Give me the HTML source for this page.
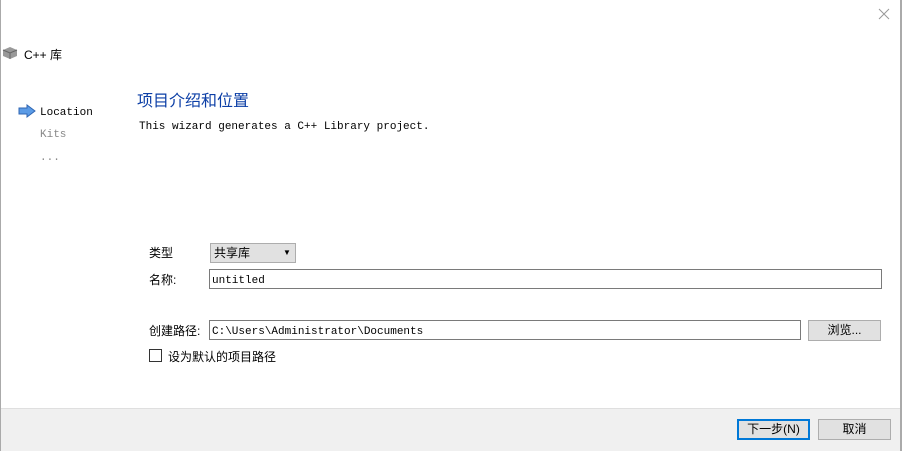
<!DOCTYPE html><html><head><style>
body{margin:0;width:902px;height:451px;position:relative;background:#fff;font-family:"Liberation Sans","Noto Sans CJK SC",sans-serif;font-size:12px;overflow:hidden}
.a{position:absolute}
.mono{font-family:"Liberation Mono","Noto Sans CJK SC",monospace;font-size:11px}
.in{position:absolute;border:1px solid #7a7a7a;background:#fff;box-sizing:border-box;padding:4px 2px 0;font-family:"Liberation Mono",monospace;font-size:11px;line-height:14px}
.btn{position:absolute;background:#e1e1e1;border:1px solid #adadad;box-sizing:border-box;text-align:center;line-height:18px;font-size:12px}
</style></head><body>
<div class="a" style="left:0;top:0;width:1px;height:451px;background:#aaa"></div>
<div class="a" style="left:900px;top:0;width:2px;height:451px;background:#aaa"></div>
<div class="a" style="left:0;top:450px;width:902px;height:1px;background:#aaa"></div>
<svg class="a" style="left:878px;top:8px" width="12" height="12"><path d="M1 1L11 11M11 1L1 11" stroke="#999" stroke-width="1"/></svg>
<svg class="a" style="left:2px;top:46px" width="16" height="14"><path d="M1 4L8 1L15 4L15 10L8 13L1 10Z" fill="#999"/><path d="M1 4L8 7L15 4M8 7V13" stroke="#666" fill="none"/></svg>
<div class="a" style="left:24px;top:46px;font-size:12px">C++ 库</div>
<svg class="a" style="left:18px;top:104px" width="18" height="14"><path d="M1 4H9V1L17 7L9 13V10H1Z" fill="#5b9be6" stroke="#2f66b3"/></svg>
<div class="a mono" style="left:40px;top:107px">Location</div>
<div class="a mono" style="left:40px;top:129px;color:#888">Kits</div>
<div class="a mono" style="left:40px;top:152px;color:#888">...</div>
<div class="a" style="left:137px;top:87px;font-size:16px;color:#0b3ea6">项目介绍和位置</div>
<div class="a mono" style="left:139px;top:121px">This wizard generates a C++ Library project.</div>
<div class="a" style="left:149px;top:244px">类型</div>
<div class="btn" style="left:210px;top:243px;width:86px;height:20px;text-align:left;padding-left:3px">共享库<span style="position:absolute;left:72px;top:0;font-size:8px">▼</span></div>
<div class="a" style="left:149px;top:271px">名称:</div>
<div class="in" style="left:209px;top:269px;width:673px;height:20px">untitled</div>
<div class="a" style="left:149px;top:322px">创建路径:</div>
<div class="in" style="left:209px;top:320px;width:592px;height:20px">C:\Users\Administrator\Documents</div>
<div class="btn" style="left:808px;top:320px;width:73px;height:21px">浏览...</div>
<div class="a" style="left:149px;top:349px;width:11px;height:11px;border:1px solid #333"></div>
<div class="a" style="left:168px;top:348px">设为默认的项目路径</div>
<div class="a" style="left:1px;top:408px;width:899px;height:42px;background:#f0f0f0;border-top:1px solid #dfdfdf"></div>
<div class="btn" style="left:737px;top:419px;width:73px;height:21px;border:2px solid #0078d7;line-height:17px">下一步(N)</div>
<div class="btn" style="left:818px;top:419px;width:73px;height:21px">取消</div>
</body></html>
